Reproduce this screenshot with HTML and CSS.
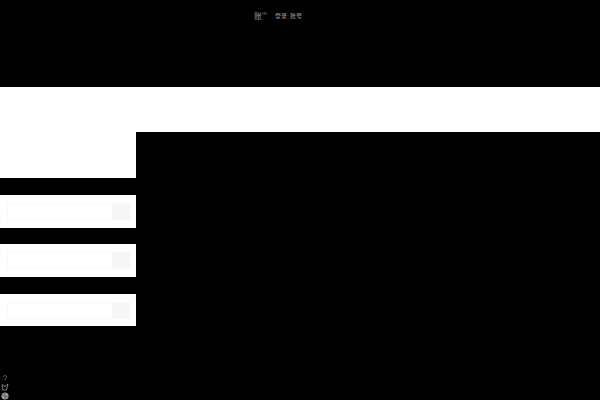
FILE: index.html
```html
<!DOCTYPE html>
<html lang="zh">
<head>
<meta charset="utf-8">
<title>登录</title>
<link rel="stylesheet" href="styles.css">
</head>
<body>
<div class="page">
  <header class="top">
    <span class="brand">账<sup class="sup">ABC</sup></span>
    <span class="title">登录</span>
    <span class="title">账号</span>
  </header>
  <div class="band"></div>
  <div class="main">
    <aside class="side">
      <div class="side-head"></div>
      <div class="cards">
        <div class="card"><div class="field"><div class="field-input"></div><div class="field-btn"></div></div></div>
        <div class="card"><div class="field"><div class="field-input"></div><div class="field-btn"></div></div></div>
        <div class="card"><div class="field"><div class="field-input"></div><div class="field-btn"></div></div></div>
      </div>
    </aside>
  </div>
  <div class="tools">
    <svg class="tool" viewBox="0 0 8 8" width="8" height="8"><path d="M2.500 3a1.500 1.500 0 1 1 2.400 1.200L4 5v1" fill="none" stroke="#888" stroke-width=".7"/></svg>
    <svg class="tool" viewBox="0 0 8 8" width="8" height="8"><path d="M1 1.500l1 5.500h3.500l1.500-6-3 2.500z" fill="none" stroke="#aaa" stroke-width=".7"/></svg>
    <svg class="tool" viewBox="0 0 8 8" width="8" height="8"><circle cx="4" cy="4" r="3.600" fill="#999"/><path d="M1 3l6 2M3 1l2 6" stroke="#555" stroke-width=".7"/></svg>
  </div>
</div>
</body>
</html>
```
FILE: styles.css
```css
* { box-sizing: border-box; }
html, body { margin: 0; height: 100%; background: #000; }
.page {
  width: 600px;
  height: 400px;
  overflow: hidden;
  background: #000;
  display: flex;
  flex-direction: column;
  position: relative;
  font-family: "Noto Sans CJK SC", "Liberation Sans", sans-serif;
}
.top {
  height: 87px;
  padding: 10px 0 0 254px;
  display: flex;
  gap: 3px;
  align-items: flex-start;
  color: #999;
  font-size: 8px;
  line-height: 12px;
}
.brand { width: 15px; margin-right: 3px; white-space: nowrap; }
.sup { font-size: 3px; vertical-align: top; line-height: 8px; color: #777; }
.title { font-size: 6px; white-space: nowrap; }
.band { height: 45px; background: #fff; flex: none; }
.side { width: 136px; }
.side-head { height: 46px; background: #fff; }
.cards {
  margin-top: 17px;
  display: flex;
  flex-direction: column;
  gap: 16.75px;
}
.card {
  height: 32.5px;
  background: #fff;
  padding: 8px 6px 7.5px 7px;
}
.field {
  height: 17px;
  display: flex;
  border: 1px solid #f8f8f8;
}
.field-input { flex: 1; background: #fff; }
.field-btn { width: 17px; background: #f6f6f6; }
.tools {
  position: absolute;
  left: 1px;
  bottom: 0;
  display: flex;
  flex-direction: column;
  gap: 1px;
}
.tool { display: block; }
```
